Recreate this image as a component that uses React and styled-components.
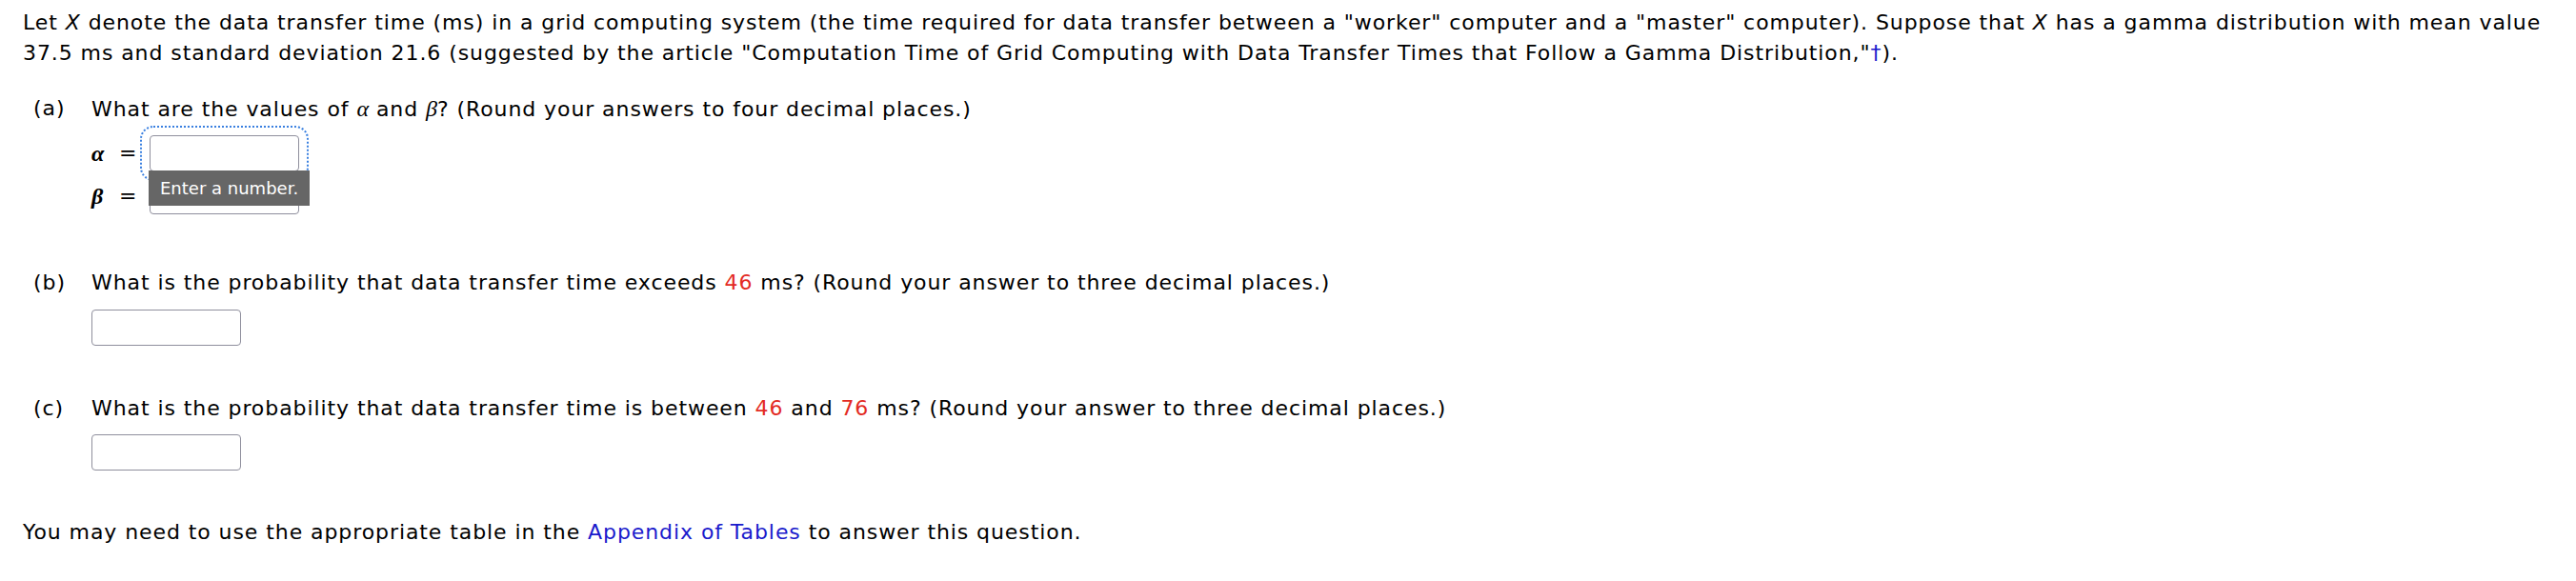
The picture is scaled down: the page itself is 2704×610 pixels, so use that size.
import React from 'react';
import styled, { createGlobalStyle } from 'styled-components';

const GlobalStyle = createGlobalStyle`
	body {
		margin: 8px;
		background: #fff;
		color: #000;
		font-family: 'DejaVu Sans', Verdana, sans-serif;
		font-size: 22px;
		line-height: 32px;
		letter-spacing: 0.92px;
	}
`;

const Page = styled.div`
	padding: 0 16px;
`;

const Intro = styled.p`
	margin: 0;
`;

const Part = styled.section`
	display: grid;
	grid-template-columns: 61px 1fr;
	margin-top: ${props => props.gap}px;
	padding-left: 11px;
`;

const PartLabel = styled.div`
	white-space: nowrap;
`;

const Question = styled.div`
	margin: 0;
`;

const Var = styled.i`
	font-style: italic;
`;

const Greek = styled.i`
	font-family: 'Liberation Serif', 'DejaVu Serif', serif;
	font-style: italic;
	font-size: 24px;
	letter-spacing: 0;
	font-weight: ${props => (props.bold ? 700 : 400)};
`;

const Num = styled.span`
	color: #e32b24;
`;

const Link = styled.a`
	color: #1a1acc;
	text-decoration: none;
`;

const Answers = styled.div`
	display: flex;
	flex-direction: column;
	gap: 7px;
	margin-top: ${props => props.top}px;
`;

const Row = styled.div`
	display: flex;
	align-items: center;
	height: 38px;
`;

const Symbol = styled.span`
	width: 29px;
`;

const Equals = styled.span`
	width: 32px;
`;

const Field = styled.div`
	position: relative;
`;

const NumberInput = styled.input`
	box-sizing: border-box;
	display: block;
	width: 157px;
	height: 38px;
	border: 1px solid #8f8f9d;
	border-radius: 4px;
	background: #fff;
	font: inherit;
	padding: 0 8px;
	${props =>
		props.focused &&
		`outline: 2px dotted #3a80e0; outline-offset: 8px;`}
`;

const Tooltip = styled.div`
	position: absolute;
	top: 37px;
	left: -1px;
	z-index: 2;
	width: 169px;
	box-sizing: border-box;
	padding: 8px 12px;
	background: #666;
	color: #fff;
	font-size: 18px;
	line-height: 21px;
	letter-spacing: 0;
	white-space: nowrap;
`;

const Footer = styled.p`
	margin: 49px 0 0;
`;

function AnswerRow({ symbol, focused, hint }) {
	return (
		<Row>
			<Symbol>
				<Greek bold>{symbol}</Greek>
			</Symbol>
			<Equals>=</Equals>
			<Field>
				<NumberInput type='text' focused={focused} />
				{hint && <Tooltip>{hint}</Tooltip>}
			</Field>
		</Row>
	);
}

function App() {
	return (
		<Page>
			<GlobalStyle />
			<Intro>
				Let <Var>X</Var> denote the data transfer time (ms) in a grid computing
				system (the time required for data transfer between a "worker" computer
				and a "master" computer). Suppose that <Var>X</Var> has a gamma
				distribution with mean value 37.5 ms and standard deviation 21.6
				(suggested by the article "Computation Time of Grid Computing with Data
				Transfer Times that Follow a Gamma Distribution,"
				<Link href='#'>†</Link>).
			</Intro>

			<Part gap={26}>
				<PartLabel>(a)</PartLabel>
				<div>
					<Question>
						What are the values of <Greek>α</Greek> and <Greek>β</Greek>? (Round
						your answers to four decimal places.)
					</Question>
					<Answers top={11}>
						<AnswerRow symbol='α' focused hint='Enter a number.' />
						<AnswerRow symbol='β' />
					</Answers>
				</div>
			</Part>

			<Part gap={56}>
				<PartLabel>(b)</PartLabel>
				<div>
					<Question>
						What is the probability that data transfer time exceeds <Num>46</Num>{' '}
						ms? (Round your answer to three decimal places.)
					</Question>
					<Answers top={12}>
						<NumberInput type='text' />
					</Answers>
				</div>
			</Part>

			<Part gap={50}>
				<PartLabel>(c)</PartLabel>
				<div>
					<Question>
						What is the probability that data transfer time is between{' '}
						<Num>46</Num> and <Num>76</Num> ms? (Round your answer to three
						decimal places.)
					</Question>
					<Answers top={11}>
						<NumberInput type='text' />
					</Answers>
				</div>
			</Part>

			<Footer>
				You may need to use the appropriate table in the{' '}
				<Link href='#'>Appendix of Tables</Link> to answer this question.
			</Footer>
		</Page>
	);
}

export default App;
